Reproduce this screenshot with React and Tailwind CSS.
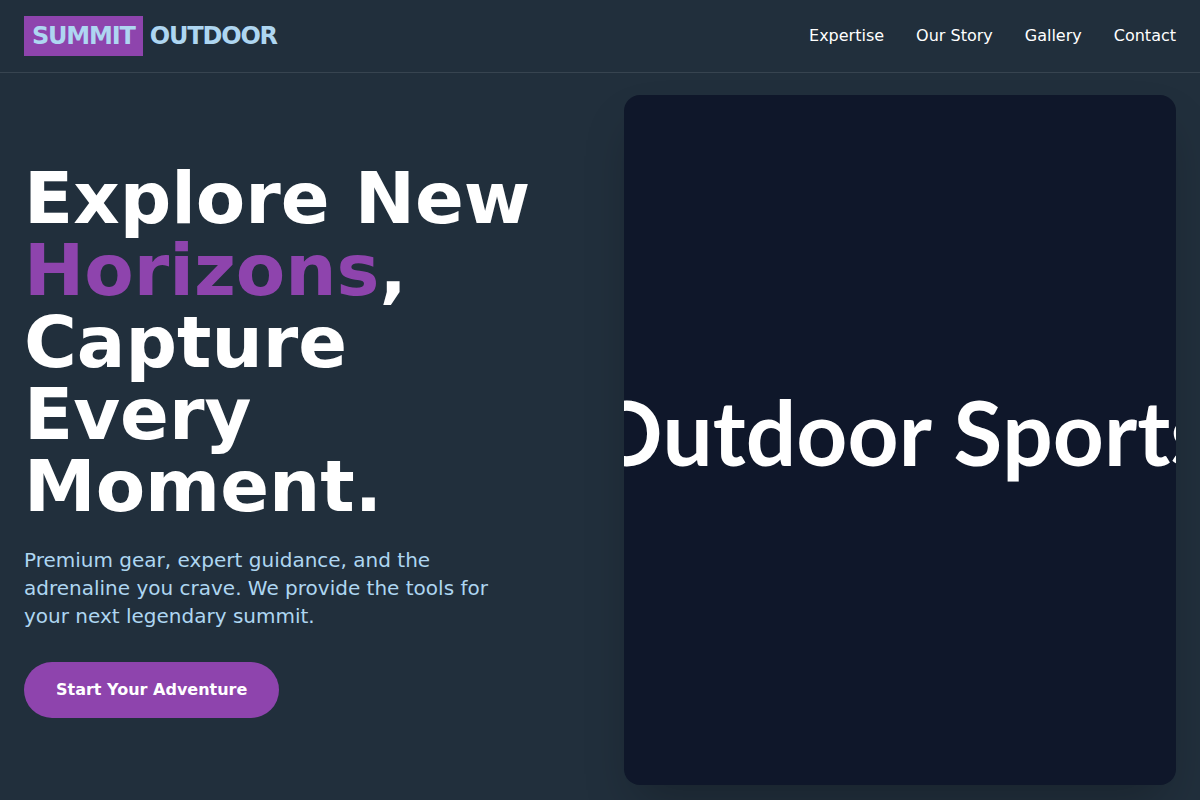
const navLinks = [
  { label: 'Expertise', href: '#expertise' },
  { label: 'Our Story', href: '#story' },
  { label: 'Gallery', href: '#gallery' },
  { label: 'Contact', href: '#contact' },
];

function Header() {
  return (
    <header className="border-b border-white/10">
      <div className="max-w-7xl mx-auto px-6 py-4 flex items-center justify-between">
        <a href="#top" className="text-2xl leading-8 font-bold tracking-tighter text-[#aed6f1]">
          <span className="inline-block bg-[#8e44ad] px-2 py-1">SUMMIT</span> OUTDOOR
        </a>
        <nav className="flex gap-8">
          {navLinks.map((link) => (
            <a key={link.label} href={link.href} className="text-white hover:text-[#aed6f1] transition-colors">
              {link.label}
            </a>
          ))}
        </nav>
      </div>
    </header>
  );
}

function Hero() {
  return (
    <section className="max-w-7xl mx-auto px-6 py-[22px] grid grid-cols-2 gap-12 items-center">
      {/* Copy */}
      <div>
        <h1 className="text-7xl leading-none font-bold text-white mb-6">
          Explore New <span className="text-[#8e44ad]">Horizons</span>, Capture Every Moment.
        </h1>
        <p className="text-xl text-[#aed6f1] max-w-lg mb-8">
          Premium gear, expert guidance, and the adrenaline you crave. We provide the tools for your next legendary summit.
        </p>
        <button className="bg-[#8e44ad] text-white font-bold px-8 py-4 rounded-full hover:bg-[#7d3c98] transition-colors">
          Start Your Adventure
        </button>
      </div>

      {/* Banner */}
      <div className="aspect-[4/5] pb-[18px] rounded-2xl overflow-hidden bg-[#0f172a] shadow-2xl flex items-center justify-center">
        <span className="font-[Lato,sans-serif] font-bold text-[89px] leading-none [font-kerning:none] text-white whitespace-nowrap">
          Outdoor Sports
        </span>
      </div>
    </section>
  );
}

function App() {
  return (
    <div id="top" className="min-h-screen overflow-hidden bg-[#212f3c] font-['DejaVu_Sans',sans-serif]">
      <Header />
      <main>
        <Hero />
      </main>
    </div>
  );
}

export default App;
